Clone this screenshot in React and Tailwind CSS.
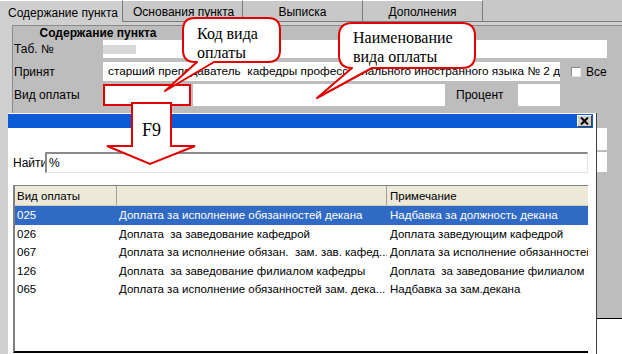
export default function App() {
  const rows = [
    ["025", "Доплата за исполнение обязанностей декана", "Надбавка за должность декана"],
    ["026", "Доплата  за заведование кафедрой", "Доплата заведующим кафедрой"],
    ["067", "Доплата за исполнение обязан.  зам. зав. кафед...", "Доплата за исполнение обязанностей зам. зав."],
    ["126", "Доплата  за заведование филиалом кафедры", "Доплата  за заведование филиалом кафедры"],
    ["065", "Доплата за исполнение обязанностей зам. дека...", "Надбавка за зам.декана"],
  ];
  return (
    <div className="relative w-[622px] h-[354px] overflow-hidden bg-[#c0c0c0] font-['Liberation_Sans',Arial,sans-serif] text-[12px] text-black">
      {/* tabs */}
      <div className="flex h-[22px]">
        <div className="w-[123px] bg-[#cfcfcf] border-t border-white border-r border-r-[#7a7a7a] pl-[8px] leading-[24px] text-[12px] whitespace-nowrap overflow-hidden">Содержание пункта</div>
        <div className="w-[120px] bg-[#c8c8c8] border-t border-white border-r border-r-[#7a7a7a] border-b border-b-[#7a7a7a] pl-[10px] leading-[23px] text-[12px] whitespace-nowrap">Основания пункта</div>
        <div className="w-[120px] bg-[#c8c8c8] border-t border-white border-r border-r-[#7a7a7a] border-b border-b-[#7a7a7a] text-center leading-[23px] text-[12px]">Выписка</div>
        <div className="w-[120px] bg-[#c8c8c8] border-t border-white border-r border-r-[#7a7a7a] border-b border-b-[#7a7a7a] text-center leading-[23px] text-[12px]">Дополнения</div>
        <div className="flex-1 bg-[#c8c8c8] border-b border-[#7a7a7a]" />
      </div>
      <div className="h-[3px] bg-[#d0d0d0]" />
      <div className="flex h-[329px]">
        <div className="w-[12px] bg-[#cfcfcf]" />
        <div className="flex-1 flex flex-col border-l border-t border-[#8a8a8a] bg-[#bdbdbd]">
          <div className="w-[170px] h-[13px] mt-px text-center font-bold leading-[13px]">Содержание пункта</div>
          <div className="flex items-center h-[18px]">
            <div className="w-[90px] pl-px">Таб. №</div>
            <div className="w-[504px] h-[18px] bg-white flex items-center">
              <div className="w-[33px] h-[9px] bg-[#d8d8d8]" />
            </div>
          </div>
          <div className="flex items-center h-[19px] mt-[4px]">
            <div className="w-[90px] pl-px">Принят</div>
            <div className="w-[457px] h-[19px] bg-white overflow-hidden whitespace-pre pl-[5px] leading-[19px] text-[11.8px]">старший преподаватель  кафедры профессионального иностранного языка № 2 д</div>
            <div className="ml-[11px] w-[10px] h-[10px] bg-white border border-[#8a8a8a] border-b-[#e8e8e8] border-r-[#e8e8e8]" />
            <div className="ml-[5px]">Все</div>
          </div>
          <div className="flex items-center h-[22px] mt-[3px]">
            <div className="w-[90px] pl-px">Вид оплаты</div>
            <div className="w-[88px] h-[22px] bg-white border-2 border-[#e00000]" />
            <div className="ml-[2px] w-[252px] h-[22px] bg-white" />
            <div className="ml-[11px] w-[62px]">Процент</div>
            <div className="w-[42px] h-[22px] bg-white" />
          </div>
          <div className="flex items-center h-[22px] mt-[22px]">
            <div className="ml-[90px] w-[504px] h-[22px] bg-white" />
          </div>
          <div className="flex items-center h-[20px] mt-[2px]">
            <div className="ml-[90px] w-[504px] h-[20px] bg-white" />
          </div>
          <div className="mt-[146px] flex-1 bg-white border-t border-black" />
        </div>
      </div>

      {/* dialog */}
      <div className="absolute left-[8px] top-[113px] w-[589px] h-[241px] bg-white border-r border-[#404040] flex flex-col">
        <div className="mt-px mr-[3px] h-[14px] bg-[#0b5bd6] flex justify-end items-center pr-px">
          <div className="w-[15px] h-[12px] bg-[#d4d0c8] border border-t-white border-l-white border-b-[#404040] border-r-[#404040] flex items-center justify-center">
            <svg width="9" height="8" viewBox="0 0 9 8">
              <path d="M1 0.5 L8 7.5 M8 0.5 L1 7.5" stroke="black" strokeWidth="2" />
            </svg>
          </div>
        </div>
        <div className="flex items-center mt-[24px] h-[21px] pl-[5px] pr-[8px]">
          <div className="w-[32px]">Найти</div>
          <div className="flex-1 h-[21px] bg-white border-t-2 border-l-2 border-[#8a8a8a] border-b border-r border-b-[#e4e4e4] border-r-[#e4e4e4] pl-[2px] leading-[18px]">%</div>
        </div>
        <div className="mt-[12px] ml-[5px] mr-[8px] mb-px flex-1 flex flex-col border-l-2 border-t border-[#808080] border-b-2 border-b-black text-[11.5px]">
          <div className="flex h-[20px] bg-[#ece9d8] border-b border-[#d0ccbc] leading-[20px]">
            <div className="w-[102px] pl-[2px] border-r border-[#a0a0a0]">Вид оплаты</div>
            <div className="w-[270px] border-r border-[#a0a0a0]" />
            <div className="flex-1 pl-[3px]">Примечание</div>
          </div>
          {rows.map((r, i) => (
            <div key={r[0]} className={`flex h-[18.5px] leading-[18px] whitespace-pre overflow-hidden ${i === 0 ? "bg-[#316ac5] text-white" : ""}`}>
              <div className="w-[102px] pl-[2px]">{r[0]}</div>
              <div className="w-[270px] pl-[2px] overflow-hidden">{r[1]}</div>
              <div className="flex-1 pl-[3px] overflow-hidden">{r[2]}</div>
            </div>
          ))}
        </div>
      </div>

      {/* annotations */}
      <svg className="absolute left-0 top-0 pointer-events-none" width="622" height="354" viewBox="0 0 622 354">
        <path d="M195,18 H268 Q280,18 280,30 V50 Q280,62 268,62 H214 L165,91 L197,62 H195 Q183,62 183,50 V30 Q183,18 195,18 Z" fill="white" stroke="#e00000" strokeWidth="2" strokeLinejoin="round" />
        <path d="M352,23 H462 Q475,23 475,36 V55 Q475,68 462,68 H372 L317,98 L352,68 Q339,68 339,55 V36 Q339,23 352,23 Z" fill="white" stroke="#e00000" strokeWidth="2" strokeLinejoin="round" />
        <polygon points="132,103 171,103 171,146 195,146 150,164 107,146 132,146" fill="white" stroke="#e00000" strokeWidth="2" />
      </svg>
      <div className="absolute left-[197px] top-[24px] font-['Liberation_Serif',serif] text-[16px] leading-[19px]">
        <div>Код вида</div>
        <div>оплаты</div>
      </div>
      <div className="absolute left-[353px] top-[28px] font-['Liberation_Serif',serif] text-[16px] leading-[19px]">
        <div>Наименование</div>
        <div>вида оплаты</div>
      </div>
      <div className="absolute left-[142px] top-[120px] font-['Liberation_Serif',serif] text-[18px] leading-[20px]">F9</div>
    </div>
  );
}
